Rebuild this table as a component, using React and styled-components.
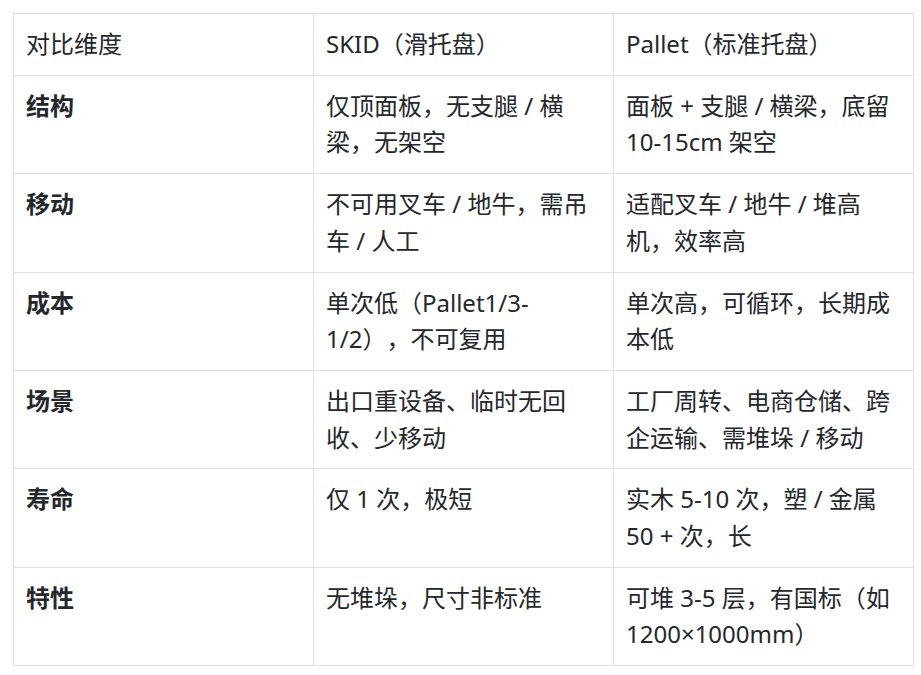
import React from "react";
import styled, { createGlobalStyle } from "styled-components";

const rows = [
  ["结构", "仅顶面板，无支腿 / 横梁，无架空", "面板 + 支腿 / 横梁，底留 10-15cm 架空"],
  ["移动", "不可用叉车 / 地牛，需吊车 / 人工", "适配叉车 / 地牛 / 堆高机，效率高"],
  ["成本", "单次低（Pallet1/3-1/2），不可复用", "单次高，可循环，长期成本低"],
  ["场景", "出口重设备、临时无回收、少移动", "工厂周转、电商仓储、跨企运输、需堆垛 / 移动"],
  ["寿命", "仅 1 次，极短", "实木 5-10 次，塑 / 金属 50 + 次，长"],
  ["特性", "无堆垛，尺寸非标准", "可堆 3-5 层，有国标（如 1200×1000mm）"],
];

class App extends React.Component {
  render() {
    return (
      <Page>
        <GlobalStyle />
        <Table>
          <colgroup>
            <Col />
            <Col />
            <Col />
          </colgroup>
          <thead>
            <tr>
              <HeadCell>对比维度</HeadCell>
              <HeadCell>SKID（滑托盘）</HeadCell>
              <HeadCell>Pallet（标准托盘）</HeadCell>
            </tr>
          </thead>
          <tbody>
            {rows.map((row) => (
              <tr key={row[0]}>
                <Cell bold>{row[0]}</Cell>
                <Cell>{row[1]}</Cell>
                <Cell>{row[2]}</Cell>
              </tr>
            ))}
          </tbody>
        </Table>
      </Page>
    );
  }
}

export default App;

const GlobalStyle = createGlobalStyle`
  body {
    margin: 0;
    background: #ffffff;
    font-family: "Noto Sans", "Noto Sans CJK SC", sans-serif;
  }
`;

const Page = styled.div`
  padding: 13px;
`;

const Table = styled.table`
  border-collapse: collapse;
  table-layout: fixed;
  width: 901px;
  color: #24272b;
  font-size: 24px;
  line-height: 36.7px;
  text-spacing-trim: space-all;
`;

const Col = styled.col`
  width: 300px;
`;

const HeadCell = styled.th`
  border: 1px solid #dedfe3;
  padding: 12px 12px;
  text-align: left;
  font-weight: 400;
  vertical-align: top;
`;

const Cell = styled.td`
  border: 1px solid #dedfe3;
  padding: 12px 12px;
  vertical-align: top;
  font-weight: ${(p) => (p.bold ? 700 : 400)};
`;
